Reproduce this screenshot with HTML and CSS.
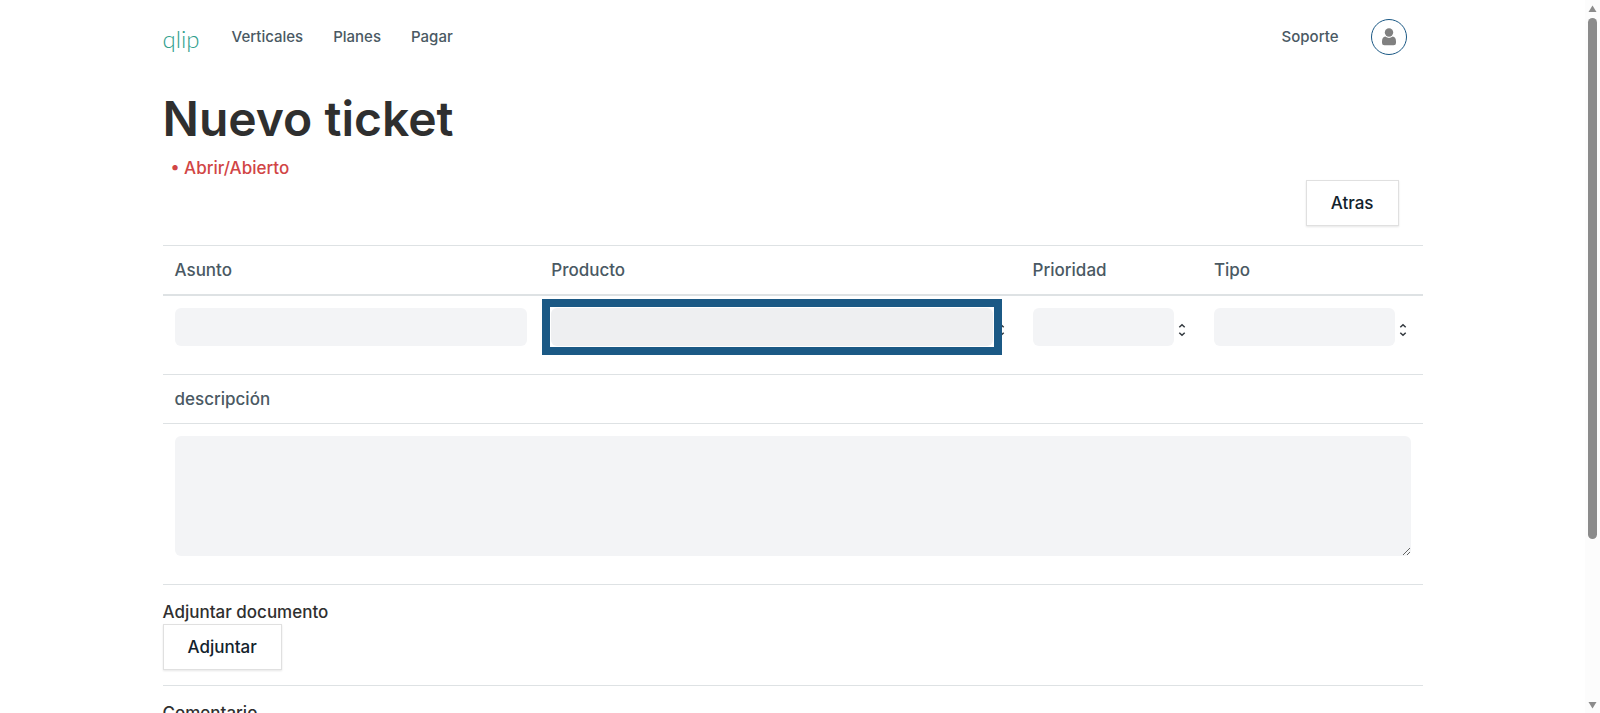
FILE: index.html
```html
<!DOCTYPE html>
<html lang="es">
<head>
    <meta charset="UTF-8">
    <meta name="viewport" content="width=device-width, initial-scale=1.0">
    <title>Nuevo ticket</title>
    <link rel="stylesheet" href="styles.css">
</head>
<body>
    <div class="page">
        <div class="container">
            <header class="navbar">
                <a class="logo" href="#">qlip</a>
                <nav class="nav-links">
                    <a href="#">Verticales</a>
                    <a href="#">Planes</a>
                    <a href="#">Pagar</a>
                </nav>
                <a class="nav-support" href="#">Soporte</a>
                <button type="button" class="user-button" aria-label="Usuario">
                    <svg width="16" height="18" viewBox="0 0 16 18" fill="#808080">
                        <circle cx="8" cy="4.5" r="4.2"/>
                        <path d="M4.3 8.6Q8 11.4 11.7 8.6Q15 9.4 15 13.4V15Q15 17.3 12.6 17.3H3.4Q1 17.3 1 15V13.4Q1 9.4 4.3 8.6Z"/>
                    </svg>
                </button>
            </header>

            <main>
                <h1>Nuevo ticket</h1>
                <p class="status">• Abrir/Abierto</p>
                <div class="actions">
                    <button type="button" class="btn">Atras</button>
                </div>

                <form>
                    <table class="fields">
                        <colgroup>
                            <col class="col-subject">
                            <col class="col-product">
                            <col class="col-priority">
                            <col class="col-type">
                        </colgroup>
                        <thead>
                            <tr>
                                <th><label for="asunto">Asunto</label></th>
                                <th><label for="producto">Producto</label></th>
                                <th><label for="prioridad">Prioridad</label></th>
                                <th><label for="tipo">Tipo</label></th>
                            </tr>
                        </thead>
                        <tbody>
                            <tr>
                                <td><div class="field"><input class="control" type="text" id="asunto"></div></td>
                                <td>
                                    <div class="field highlighted">
                                        <select class="control" id="producto"><option></option></select>
                                        <svg class="arrows" width="16" height="16" viewBox="0 0 16 16"><path d="M5.3 5.3L8 2.7L10.7 5.3M5.3 10.7L8 13.3L10.7 10.7"/></svg>
                                    </div>
                                </td>
                                <td>
                                    <div class="field">
                                        <select class="control" id="prioridad"><option></option></select>
                                        <svg class="arrows" width="16" height="16" viewBox="0 0 16 16"><path d="M5.3 5.3L8 2.7L10.7 5.3M5.3 10.7L8 13.3L10.7 10.7"/></svg>
                                    </div>
                                </td>
                                <td>
                                    <div class="field">
                                        <select class="control" id="tipo"><option></option></select>
                                        <svg class="arrows" width="16" height="16" viewBox="0 0 16 16"><path d="M5.3 5.3L8 2.7L10.7 5.3M5.3 10.7L8 13.3L10.7 10.7"/></svg>
                                    </div>
                                </td>
                            </tr>
                        </tbody>
                    </table>

                    <div class="row row-label"><label for="descripcion">descripción</label></div>
                    <div class="row row-text"><textarea class="control" id="descripcion"></textarea></div>

                    <section class="block">
                        <div>Adjuntar documento</div>
                        <button type="button" class="btn">Adjuntar</button>
                    </section>

                    <section class="block">
                        <label for="comentario">Comentario</label>
                        <textarea class="control" id="comentario"></textarea>
                    </section>
                </form>
            </main>
        </div>
    </div>

    <div class="scrollbar" aria-hidden="true">
        <svg width="9" height="18" viewBox="0 0 9 18"><path d="M0.5 12H8.5L4.5 5.5Z"/></svg>
        <div class="track"><div class="thumb"></div></div>
        <svg width="9" height="18" viewBox="0 0 9 18"><path d="M0.5 7H8.5L4.5 13.5Z"/></svg>
    </div>
</body>
</html>
```
FILE: styles.css
```css
* {
    box-sizing: border-box;
}
body {
    display: flex;
    height: 100vh;
    margin: 0;
    font-family: Inter, "Noto Sans", sans-serif;
    font-size: 17px;
    font-weight: 500;
    line-height: 24px;
    color: #2f2f2f;
    background: #fff;
}
.page {
    flex: 1;
    overflow-y: auto;
    scrollbar-width: none;
}
.container {
    max-width: 1260px;
    margin: 0 auto;
}

/* Header */
.navbar {
    display: flex;
    align-items: center;
    height: 74px;
    padding-right: 16px;
    font-size: 15px;
}
.navbar a {
    color: #4a5963;
    text-decoration: none;
}
.navbar .logo {
    padding-top: 4px;
    font-family: Lato, sans-serif;
    font-size: 24px;
    font-weight: 300;
    color: #2fa08d;
}
.nav-links {
    display: flex;
    flex: 1;
    gap: 30px;
    margin-left: 32px;
}
.user-button {
    display: flex;
    align-items: center;
    justify-content: center;
    width: 36px;
    height: 36px;
    margin-left: 32px;
    padding: 0;
    border: 1px solid #1b5985;
    border-radius: 50%;
    background: #fff;
    cursor: pointer;
}

/* Title */
h1 {
    margin: 16px 0 8px;
    font-size: 48px;
    font-weight: 600;
    line-height: 58px;
}
.status {
    margin: 0;
    padding-left: 8px;
    color: #d14545;
}
.actions {
    display: flex;
    justify-content: flex-end;
    padding: 0 24px 19px 0;
}
.btn {
    height: 46px;
    padding: 0 24px;
    border: 1px solid #e0e0e0;
    background: #fff;
    box-shadow: 0 1px 2px rgba(0, 0, 0, 0.1);
    font: inherit;
    color: #12222c;
    cursor: pointer;
}

/* Form */
.fields {
    width: 100%;
    table-layout: fixed;
    border-spacing: 0;
}
.col-subject {
    width: 29.9%;
}
.col-product {
    width: 38.2%;
}
.col-priority {
    width: 14.4%;
}
.col-type {
    width: 17.5%;
}
th {
    padding: 12px;
    border-top: 1px solid #dee2e4;
    border-bottom: 2px solid #dee2e4;
    font-weight: 500;
    text-align: left;
    color: #4a5963;
}
td {
    padding: 12px 12px 28px;
}
.field {
    display: flex;
    position: relative;
}
.control {
    display: block;
    width: 100%;
    height: 38px;
    padding: 6px 12px;
    border: 0;
    border-radius: 6px;
    background: #f3f4f6;
    font: inherit;
    color: #2f2f2f;
    appearance: none;
}
select.control {
    flex: 1;
    min-width: 0;
}
textarea.control {
    height: 120px;
}
.arrows {
    align-self: center;
    margin-top: 5px;
    fill: none;
    stroke: #343a40;
    stroke-width: 1.5;
}
.highlighted .control {
    background: #eeeff1;
}
.highlighted::after {
    content: "";
    position: absolute;
    inset: -9px 7px -9px -9px;
    border: 8px solid #1b5985;
    pointer-events: none;
}
.row {
    padding: 12px;
    border-top: 1px solid #dee2e4;
}
.row-label {
    color: #4a5963;
}
.row-text {
    padding-bottom: 28px;
}
.block {
    padding: 15px 0;
    border-top: 1px solid #dee2e4;
}

/* Scrollbar */
.scrollbar {
    display: flex;
    flex-direction: column;
    align-items: center;
    width: 15px;
    background: #fcfcfc;
    fill: #8b8b8b;
}
.track {
    flex: 1;
}
.thumb {
    width: 9px;
    height: 77%;
    border-radius: 5px;
    background: #8b8b8b;
}
```
